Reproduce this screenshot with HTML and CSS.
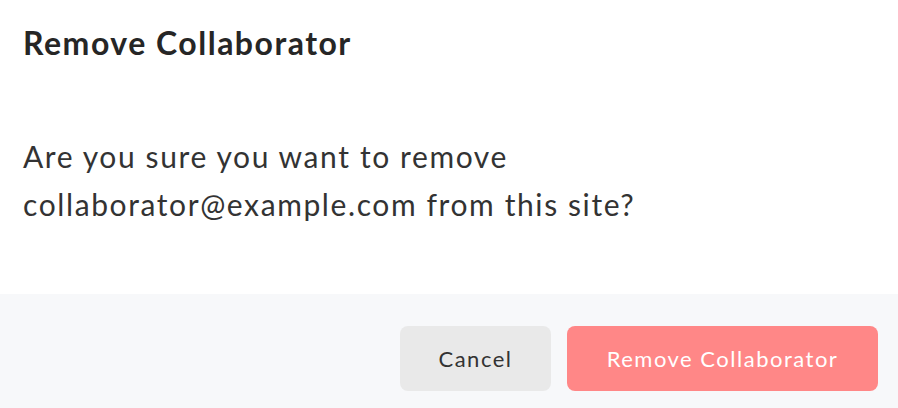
FILE: index.html
```html
<!DOCTYPE html>
<html>
<head>
<meta charset="utf-8">
<link rel="stylesheet" href="styles.css">
</head>
<body>
<div class="dialog">
  <div class="header"><h2 class="title">Remove Collaborator</h2></div>
  <div class="content"><p class="message">Are you sure you want to remove collaborator@example.com from this site?</p></div>
  <div class="footer">
    <button class="btn btn-cancel">Cancel</button>
    <button class="btn btn-danger">Remove Collaborator</button>
  </div>
</div>
</body>
</html>
```
FILE: styles.css
```css
html, body { margin: 0; padding: 0; background: #fff; }
body { font-family: "Lato", "Noto Sans", sans-serif; color: #2b2b2b; }
.dialog { width: 898px; display: flex; flex-direction: column; }
.header { padding: 23px 23px 0; height: 70px; box-sizing: border-box; }
.title { margin: 0; font-size: 32px; font-weight: 700; line-height: 40px; letter-spacing: 1.5px; color: #262626; }
.content { padding: 62px 23px 0; height: 224px; box-sizing: border-box; }
.message { margin: 0; font-size: 30px; line-height: 48px; letter-spacing: 1.6px; color: #333; width: 680px; }
.footer { background: #f7f8fa; padding: 32px 20px 32px; display: flex; justify-content: flex-end; gap: 16px; }
.btn { height: 65px; border: none; border-radius: 8px; font-family: inherit; font-size: 22px; letter-spacing: 1.5px; padding: 0; cursor: pointer; }
.btn-cancel { background: #e9e9e9; color: #333; width: 151px; }
.btn-danger { background: #ff8787; color: #fff; width: 311px; }
```
